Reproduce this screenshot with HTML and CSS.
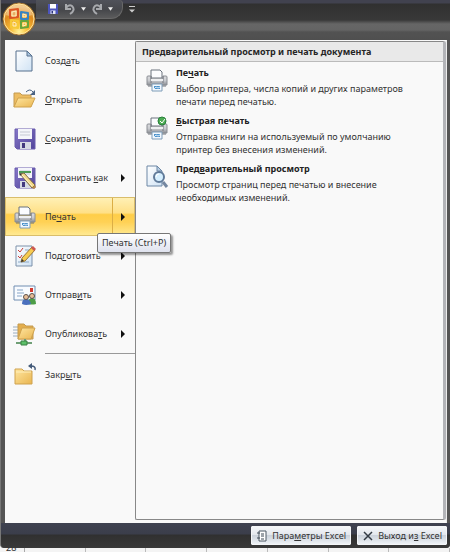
FILE: index.html
```
<!DOCTYPE html>
<html lang="ru">
<head>
<meta charset="utf-8">
<title>Excel</title>
<link rel="stylesheet" href="styles.css">
</head>
<body>
<svg class="defs" aria-hidden="true">
  <defs>
    <linearGradient id="folder" x1="0" y1="0" x2="1" y2="1"><stop offset="0" stop-color="#ffe6a0"/><stop offset="1" stop-color="#e9b550"/></linearGradient>
    <linearGradient id="paper" x1="0" y1="0" x2="1" y2="1"><stop offset="0" stop-color="#ffffff"/><stop offset="1" stop-color="#cfe2f4"/></linearGradient>
    <linearGradient id="metal" x1="0" y1="0" x2="0" y2="1"><stop offset="0" stop-color="#dcdde0"/><stop offset=".5" stop-color="#c9cbcf"/><stop offset="1" stop-color="#8b8e94"/></linearGradient>
    <linearGradient id="disk" x1="0" y1="0" x2="1" y2="1"><stop offset="0" stop-color="#8678c8"/><stop offset="1" stop-color="#51449a"/></linearGradient>
    <radialGradient id="orb" cx=".5" cy=".9" r=".9"><stop offset="0" stop-color="#fff39a"/><stop offset=".3" stop-color="#f9bd35"/><stop offset=".65" stop-color="#dd8a1e"/><stop offset="1" stop-color="#f3c987"/></radialGradient>
    <symbol id="i-printer" viewBox="0 0 24 24">
      <path d="M6 10V2h9l2 2v6z" fill="#fbfcfe" stroke="#6a727d"/>
      <path d="M2 9q0-1 1-1h3v3h12V8h3q1 0 1 1v8H2z" fill="url(#metal)" stroke="#8b8e94"/>
      <path d="M6 8v7M18 8v7" stroke="#777b83"/>
      <path d="M6 12h12" stroke="#eeeff1" stroke-width="2"/>
      <path d="M3 18h18" stroke="#6f737a"/>
      <path d="M7 16h10v7H7z" fill="#f2f8fe" stroke="#7e9db8"/>
      <path d="M9 18h6v3H9z" fill="#4d93cc"/>
      <path d="M9 21l2-2 2 1 2-1" fill="none" stroke="#d5e9f8"/>
    </symbol>
    <symbol id="i-disk" viewBox="0 0 24 24">
      <path d="M2 2h20v20H4l-2-2z" fill="url(#disk)" stroke="#6a5cae"/>
      <path d="M5 2h14v10H5z" fill="#f4f5fa"/>
      <path d="M7 5h10M7 8h10" stroke="#c5c8d3"/>
      <path d="M7 15h11v7H7z" fill="#d7dae4"/>
      <path d="M9 16h3v5H9z" fill="#43397e"/>
    </symbol>
    <symbol id="i-pencil" viewBox="0 0 24 24">
      <path d="M7 8l4-1 11 12-3 3z" fill="#f3d98a" stroke="#7d6a45"/>
      <path d="M9 9l10 11" stroke="#fff6cf"/>
      <path d="M6 7l3 1-2 2z" fill="#353535"/>
      <path d="M19 22l3-3 1 2-2 2z" fill="#b98a48"/>
    </symbol>
    <symbol id="i-arrow" viewBox="0 0 4 8"><path d="M0 0l4 4-4 4z" fill="#111"/></symbol>
  </defs>
</svg>
<div class="app">
  <header class="top">
    <button class="orb" aria-label="Office">
      <svg viewBox="0 0 34 34">
        <circle cx="17" cy="17" r="16" fill="url(#orb)" stroke="#9c6c2d"/>
        <circle cx="17" cy="17" r="15" fill="none" stroke="#ffe6a0"/>
        <path d="M4 13Q6 3 17 3t13 10Q17 18 4 13z" fill="#fff" opacity=".3"/>
        <g fill="none" stroke-width="2" stroke-linejoin="round">
          <path d="M8 8l8-1v8l-8 1z" stroke="#dc5523"/>
          <path d="M19 10l7 1v6h-7z" stroke="#3683c4"/>
          <path d="M9 18l7 1v7l-7-1z" stroke="#f6c936"/>
          <path d="M19 19h7v6l-7 1z" stroke="#68a53a"/>
          <path d="M10 10l4-1v5h-4zM21 12l3 1v2h-3zM11 20l3 1v3h-3zM21 21h3v2l-3 1z" stroke="#fff0c0" stroke-width="1"/>
        </g>
      </svg>
    </button>
    <div class="quick">
      <button aria-label="Сохранить"><svg class="q-icon" viewBox="0 0 24 24"><path d="M2 2h20v20H2z" fill="#4d55bd"/><path d="M6 2h12v9H6z" fill="#fff"/><path d="M7 15h10v7H7z" fill="#e1e4f3"/><path d="M9 16h3v5H9z" fill="#29317f"/></svg></button>
      <button aria-label="Отменить"><svg class="q-icon" viewBox="0 0 12 12"><path d="M2 1v5h5M2 5q3-4 6-2 4 4-2 8" fill="none" stroke="#a7a9ad" stroke-width="2"/></svg></button>
      <button aria-label="Список отмены"><svg class="q-down" viewBox="0 0 6 4"><path d="M0 0h6L3 4z" fill="#eee"/></svg></button>
      <button aria-label="Вернуть"><svg class="q-icon" viewBox="0 0 12 12"><path d="M10 1v5H5M10 5Q7 1 4 3q-4 4 2 8" fill="none" stroke="#a7a9ad" stroke-width="2"/></svg></button>
      <button aria-label="Список возврата"><svg class="q-down" viewBox="0 0 6 4"><path d="M0 0h6L3 4z" fill="#eee"/></svg></button>
    </div>
    <button class="customize" aria-label="Настройка панели"><svg viewBox="0 0 6 8"><path d="M0 1h6" stroke="#ccc"/><path d="M0 4h6L3 7z" fill="#ccc"/></svg></button>
  </header>

  <main class="body">
    <nav class="menu">
      <button class="item"><svg class="icon" viewBox="0 0 24 24"><path d="M3 2h11l5 5v15H3z" fill="url(#paper)" stroke="#56708e"/><path d="M14 2v5h5z" fill="#a9c4df" stroke="#56708e"/></svg><span>Созд<u>а</u>ть</span></button>
      <button class="item"><svg class="icon" viewBox="0 0 24 24"><path d="M1 19V5h6l2 2h9v4" fill="#edbd62" stroke="#c39a50"/><path d="M1 19l4-9h17l-4 9z" fill="url(#folder)" stroke="#cfa24e"/><path d="M13 4q4-4 7 0" fill="none" stroke="#4a6383"/><path d="M22 2v5h-5z" fill="#4a6383"/></svg><span><u>О</u>ткрыть</span></button>
      <button class="item"><svg class="icon"><use href="#i-disk"/></svg><span><u>С</u>охранить</span></button>
      <button class="item"><svg class="icon" viewBox="0 0 24 24"><use href="#i-disk"/><path d="M6 6h12" stroke="#4b9c55" stroke-width="2"/><use href="#i-pencil"/></svg><span>Сохранить <u>к</u>ак</span><svg class="arrow"><use href="#i-arrow"/></svg></button>
      <div class="slot">
        <button class="item active" aria-describedby="tip"><svg class="icon"><use href="#i-printer"/></svg><span>Пе<u>ч</u>ать</span><svg class="arrow"><use href="#i-arrow"/></svg></button>
        <div class="tip" id="tip" role="tooltip">Печать (Ctrl+P)</div>
      </div>
      <button class="item"><svg class="icon" viewBox="0 0 24 24"><path d="M3 2h16v20H3z" fill="url(#paper)" stroke="#7d91aa"/><path d="M5 6l2 2 3-4M5 12l2 2 2-3" fill="none" stroke="#cb3d35"/><path d="M5 18h11M12 6h4" stroke="#8da9c5"/><path d="M9 14L19 3l3 3-10 11-4 1z" fill="#f6cb50" stroke="#96763a"/><path d="M18 4l2-2 3 3-2 2z" fill="#ce5951"/><path d="M8 18l1-3 2 2z" fill="#333"/></svg><span>Под<u>г</u>отовить</span><svg class="arrow"><use href="#i-arrow"/></svg></button>
      <button class="item"><svg class="icon" viewBox="0 0 24 24"><path d="M1 3h21v14H1z" fill="#f8fbff" stroke="#718eb1"/><path d="M17 5h3v4h-3z" fill="#d33c31"/><path d="M4 7h6M4 10h7M4 13h5" stroke="#85a3c5"/><path d="M15 21q0-6 4-6t4 6q-4 1-8 0z" fill="#4d9d47"/><circle cx="19" cy="13" r="2.500" fill="#e8bd98" stroke="#5b514b"/><path d="M9 21q0-5 4-5t5 5q-5 2-9 0z" fill="#4b70bd"/><circle cx="13" cy="14" r="2.500" fill="#e8bd98" stroke="#5b514b"/></svg><span>Отправ<u>и</u>ть</span><svg class="arrow"><use href="#i-arrow"/></svg></button>
      <button class="item"><svg class="icon" viewBox="0 0 24 24"><path d="M0 5h5M0 8h5M0 11h5M0 14h5" stroke="#9badc0"/><path d="M5 17V2h6l2 2h7v13z" fill="#e4ae4c" stroke="#c39a50"/><path d="M5 17l4-11h13l-4 11z" fill="url(#folder)" stroke="#cfa24e"/><path d="M12 17v3M3 21h16" stroke="#6f9f76" stroke-width="2"/><path d="M8 19h6v4H8z" fill="#5cc069" stroke="#3b8145"/></svg><span>Опубликова<u>т</u>ь</span><svg class="arrow"><use href="#i-arrow"/></svg></button>
      <hr>
      <button class="item"><svg class="icon" viewBox="0 0 24 24"><path d="M2 21V6h7l2 2h8v13z" fill="url(#folder)" stroke="#cfa24e"/><path d="M3 9h15" stroke="#fff0bd"/><path d="M18 3q5 0 4 4" fill="none" stroke="#435a79" stroke-width="1.500"/><path d="M15 3l4-3v6z" fill="#435a79"/></svg><span>Закр<u>ы</u>ть</span></button>
    </nav>

    <section class="panel">
      <h2>Предварительный просмотр и печать документа</h2>
      <button class="choice"><svg class="icon"><use href="#i-printer"/></svg><span class="copy"><b>Пе<u>ч</u>ать</b><span>Выбор принтера, числа копий и других параметров печати перед печатью.</span></span></button>
      <button class="choice"><svg class="icon" viewBox="0 0 24 24"><use href="#i-printer"/><circle cx="17" cy="5" r="4" fill="#4eac54" stroke="#27803a"/><path d="M15 5l2 2 3-4" fill="none" stroke="#fff"/></svg><span class="copy"><b><u>Б</u>ыстрая печать</b><span>Отправка книги на используемый по умолчанию принтер без внесения изменений.</span></span></button>
      <button class="choice"><svg class="icon" viewBox="0 0 24 24"><path d="M2 2h10l5 5v15H2z" fill="url(#paper)" stroke="#6c87a5"/><path d="M12 2v5h5z" fill="#b9cfe4" stroke="#6c87a5"/><path d="M18 18l4 5" stroke="#7487a0" stroke-width="3"/><circle cx="14" cy="13" r="5" fill="#d5efff" stroke="#607a99" stroke-width="2"/><path d="M11 13q0-3 3-3" fill="none" stroke="#fff"/></svg><span class="copy"><b>Пред<u>в</u>арительный просмотр</b><span>Просмотр страниц перед печатью и внесение необходимых изменений.</span></span></button>
    </section>
  </main>

  <footer class="bottom">
    <button><svg viewBox="0 0 12 12"><path d="M3 1h7v10H3z" fill="#fff" stroke="#4d5965"/><path d="M5 4h3M5 6h3M5 9h3M1 3h3M1 8h3" stroke="#3d4954"/></svg><span>Пара<u>м</u>етры Excel</span></button>
    <button><svg viewBox="0 0 12 12"><path d="M2 2l8 8M10 2l-8 8" stroke="#333b44" stroke-width="1.500"/></svg><span>Выход и<u>з</u> Excel</span></button>
  </footer>
</div>
<div class="sheet"><span>28</span><i></i><i></i><i></i><i></i><i></i><i></i><i></i></div>
</body>
</html>
```
FILE: styles.css
```
* { box-sizing: border-box; }

body {
  margin: 0;
  height: 100vh;
  display: flex;
  flex-direction: column;
  overflow: hidden;
  background: #f4f4f4;
  color: #333;
  font: 9px/13px "Noto Sans", "Open Sans", sans-serif;
}

button {
  margin: 0;
  padding: 0;
  border: 0;
  background: none;
  color: inherit;
  font: inherit;
  text-align: left;
}

svg { display: block; flex: none; }
u { text-decoration-thickness: 1px; text-underline-offset: 1px; }
.defs { position: absolute; width: 0; height: 0; }

.app {
  flex: 1;
  min-height: 0;
  display: flex;
  flex-direction: column;
  border-left: 1px solid #777;
  border-radius: 0 0 4px 4px;
  background: #555;
}

.top {
  height: 40px;
  flex: none;
  display: flex;
  align-items: flex-start;
  background: linear-gradient(#41424f 0 3px, #303030 4px, #383838 20px, #505050 22px, #666 24px, #646464 30px, #525252 32px, #4f4f4f);
}

.orb { width: 34px; height: 34px; margin: 2px 0 0 1px; }
.orb svg { width: 34px; height: 34px; }

.quick {
  height: 19px;
  display: flex;
  align-items: center;
  gap: 5px;
  padding: 0 9px 0 11px;
  border: 1px solid #686868;
  border-width: 0 1px 1px 0;
  border-radius: 0 4px 12px 0;
  background: linear-gradient(#50525a, #46474b 10px, #5b5b5c);
}

.q-icon { width: 12px; height: 12px; }
.q-down { width: 5px; height: 4px; }
.customize { margin: 5px 0 0 6px; }
.customize svg { width: 6px; height: 9px; }

.body {
  flex: 1;
  min-height: 0;
  display: flex;
  margin: 0 3px 0 4px;
  padding: 1px 0 3px 0;
  border-right: 1px solid #eee;
  background: #f9f9f9;
}

.menu { width: 130px; flex: none; }

.item {
  width: 100%;
  height: 39px;
  display: flex;
  align-items: center;
  gap: 8px;
  padding: 0 10px 0 8px;
}

.item .arrow { margin-left: auto; }
.icon { width: 24px; height: 24px; }
.arrow { width: 4px; height: 8px; }

.active {
  border: 1px solid #d9bd6b;
  padding: 0 9px 0 7px;
  background:
    linear-gradient(#dcae45, #dcae45) 106px 0 / 1px 100% no-repeat,
    linear-gradient(#fff0b5, #ffe087 40%, #ffce48 45%, #ffd155 65%, #ffe991);
}

.slot { position: relative; }

.tip {
  position: absolute;
  z-index: 1;
  left: 92px;
  top: 36px;
  padding: 2px 4px;
  border: 1px solid #777;
  border-radius: 2px;
  background: linear-gradient(#fff, #dfe2ee);
  box-shadow: 2px 2px 2px #0006;
  line-height: 14px;
  white-space: nowrap;
}

.menu hr {
  height: 1px;
  margin: 0 0 1px 40px;
  border: 0;
  background: #999;
}

.panel {
  flex: 1;
  min-width: 0;
  border: 1px solid #888;
  border-right: 3px solid #b3b4b8;
  border-radius: 2px;
}

.panel h2 {
  margin: 0 0 2px;
  padding: 3px 6px;
  border-bottom: 1px solid #bbb;
  background: #e9e9e9;
  color: #262626;
  font-size: 9px;
  line-height: 13px;
  white-space: nowrap;
}

.choice {
  width: 100%;
  height: 48px;
  display: flex;
  align-items: flex-start;
  gap: 7px;
  padding: 0 40px 0 9px;
}

.choice .icon { margin-top: 4px; }
.copy { display: flex; flex-direction: column; }
.copy b { color: #222; line-height: 18px; }

.bottom {
  height: 25px;
  flex: none;
  display: flex;
  align-items: center;
  justify-content: flex-end;
  gap: 6px;
  padding-right: 3px;
  border-radius: 0 0 4px 4px;
  background: linear-gradient(#3f4250, #3b3e4b 11px, #303030 12px, #393939);
}

.bottom button {
  height: 19px;
  display: flex;
  align-items: center;
  gap: 4px;
  padding: 0 4px;
  border: 1px solid #f4f6f8;
  border-radius: 1px;
  background: linear-gradient(#f4f6f9, #e3e7ed 45%, #cbd2db 50%, #eef2f6);
}

.bottom svg { width: 12px; height: 12px; }

.sheet {
  height: 4px;
  flex: none;
  display: flex;
  overflow: hidden;
}

.sheet span { width: 25px; padding-left: 6px; border-right: 1px solid #aaa; line-height: 0; }
.sheet i { flex: 1; border-right: 1px solid #bbb; }
```
